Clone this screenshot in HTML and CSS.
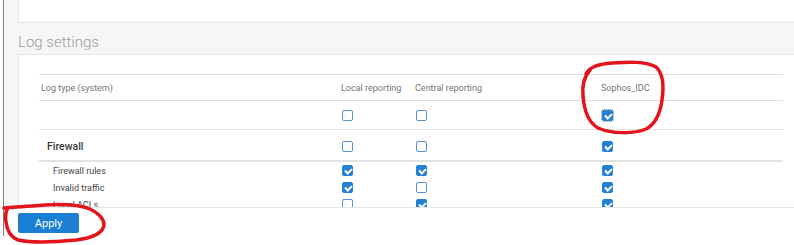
FILE: index.html
```html
<!DOCTYPE html>
<html lang="en">
<head>
  <meta charset="UTF-8">
  <title>Log settings</title>
  <link rel="stylesheet" href="styles.css">
</head>
<body>
  <div class="page">
    <div class="top-panel"></div>
    <h2 class="section-head">Log settings</h2>
    <div class="panel">
      <div class="log-table">
        <div class="row head">
          <div class="cell">Log type (system)</div>
          <div class="cell">Local reporting</div>
          <div class="cell">Central reporting</div>
          <div class="cell">Sophos_IDC</div>
        </div>
        <div class="row all">
          <div class="cell"></div>
          <div class="cell"><span class="cb"></span></div>
          <div class="cell"><span class="cb"></span></div>
          <div class="cell"><span class="cb on focus"></span></div>
        </div>
        <div class="row group">
          <div class="cell name">Firewall</div>
          <div class="cell"><span class="cb"></span></div>
          <div class="cell"><span class="cb"></span></div>
          <div class="cell"><span class="cb on"></span></div>
        </div>
        <div class="row item">
          <div class="cell name">Firewall rules</div>
          <div class="cell"><span class="cb on"></span></div>
          <div class="cell"><span class="cb on"></span></div>
          <div class="cell"><span class="cb on"></span></div>
        </div>
        <div class="row item">
          <div class="cell name">Invalid traffic</div>
          <div class="cell"><span class="cb on"></span></div>
          <div class="cell"><span class="cb"></span></div>
          <div class="cell"><span class="cb on"></span></div>
        </div>
        <div class="row item">
          <div class="cell name">Local ACLs</div>
          <div class="cell"><span class="cb"></span></div>
          <div class="cell"><span class="cb on"></span></div>
          <div class="cell"><span class="cb on"></span></div>
        </div>
      </div>
    </div>
    <div class="actions">
      <button class="btn" type="button">Apply</button>
    </div>
  </div>

  <!-- hand drawn marks on the screenshot -->
  <svg class="marks" width="794" height="245" viewBox="0 0 794 245">
    <path d="M586 74 C590 66 600 64 612 63 C628 62 646 61 656 67 C663 73 664 86 662 100 C660 114 656 124 646 129 C634 134 612 134 598 128 C588 122 584 110 583 96 C582 86 583 78 590 70"/>
    <path d="M4 208 C14 207 30 206 45 205 C62 204 80 205 90 209 C98 213 104 219 104 225 C103 233 92 238 76 240 C56 242 32 243 18 240 C10 237 7 230 6 222 C5 216 5 212 8 208"/>
  </svg>
</body>
</html>
```

FILE: styles.css
```css
* {
  margin: 0;
  padding: 0;
  box-sizing: border-box;
}
body {
  background-color: #fff;
  font-family: Roboto, "Liberation Sans", sans-serif;
  color: #555;
}
.page {
  margin-left: 3px;
  border-left: 1px solid #7d7d7d;
  height: 236px;
  background-color: #f6f6f6;
  display: flex;
  flex-direction: column;
}
.top-panel {
  margin-left: 14px;
  height: 23px;
  background-color: #fff;
  border-left: 1px solid #e6e6e6;
  border-bottom: 1px solid #e6e6e6;
}
.section-head {
  margin-left: 14px;
  height: 32px;
  padding-top: 10px;
  font-size: 15px;
  line-height: 18px;
  font-weight: 300;
  color: #9c9c9c;
  border-bottom: 1px solid #e6e6e6;
}
.panel {
  margin-left: 14px;
  height: 153px;
  background-color: #fff;
  border-left: 1px solid #e6e6e6;
  border-bottom: 1px solid #e6e6e6;
  padding: 19px 11px 0 20px;
  overflow: hidden;
}
.row {
  display: grid;
  grid-template-columns: 300px 74px 186px 1fr;
  align-items: center;
}
.cell {
  padding-left: 2px;
  font-size: 9px;
  white-space: nowrap;
}
.head {
  height: 27px;
  border-top: 1px solid #ddd;
  border-bottom: 1px solid #ddd;
  color: #767676;
}
.all {
  height: 29px;
  border-bottom: 1px solid #e4e4e4;
}
.group {
  height: 32px;
  padding-top: 3px;
  border-bottom: 2px solid #e2e2e2;
}
.group .name {
  padding-left: 8px;
  font-size: 10.5px;
  font-weight: 500;
  color: #3a3a3a;
}
.item {
  height: 17px;
}
.item .name {
  padding-left: 14px;
  font-size: 9px;
  color: #444;
}
.cb {
  display: block;
  position: relative;
  width: 11px;
  height: 11px;
  margin-left: 1px;
  border: 1px solid #5b90d2;
  border-radius: 2px;
  background-color: #fff;
}
.cb.on {
  background-color: #2480d4;
  border-color: #2480d4;
}
.cb.on::after {
  content: "";
  position: absolute;
  left: 2.5px;
  top: 1px;
  width: 3px;
  height: 5px;
  border: solid #fff;
  border-width: 0 2px 2px 0;
  transform: rotate(45deg);
}
.cb.focus {
  outline: 1px dotted #888;
  outline-offset: 0;
}
.actions {
  flex: 1;
  background-color: #fff;
  padding: 5px 0 0 14px;
}
.btn {
  display: block;
  width: 61px;
  height: 20px;
  border: none;
  border-radius: 2px;
  background-color: #1a7fd4;
  color: #fff;
  font-family: Roboto, "Liberation Sans", sans-serif;
  font-size: 11px;
}
.marks {
  position: absolute;
  left: 0;
  top: 0;
  fill: none;
  stroke: #e3141c;
  stroke-width: 3.5;
  stroke-linecap: round;
}
```
